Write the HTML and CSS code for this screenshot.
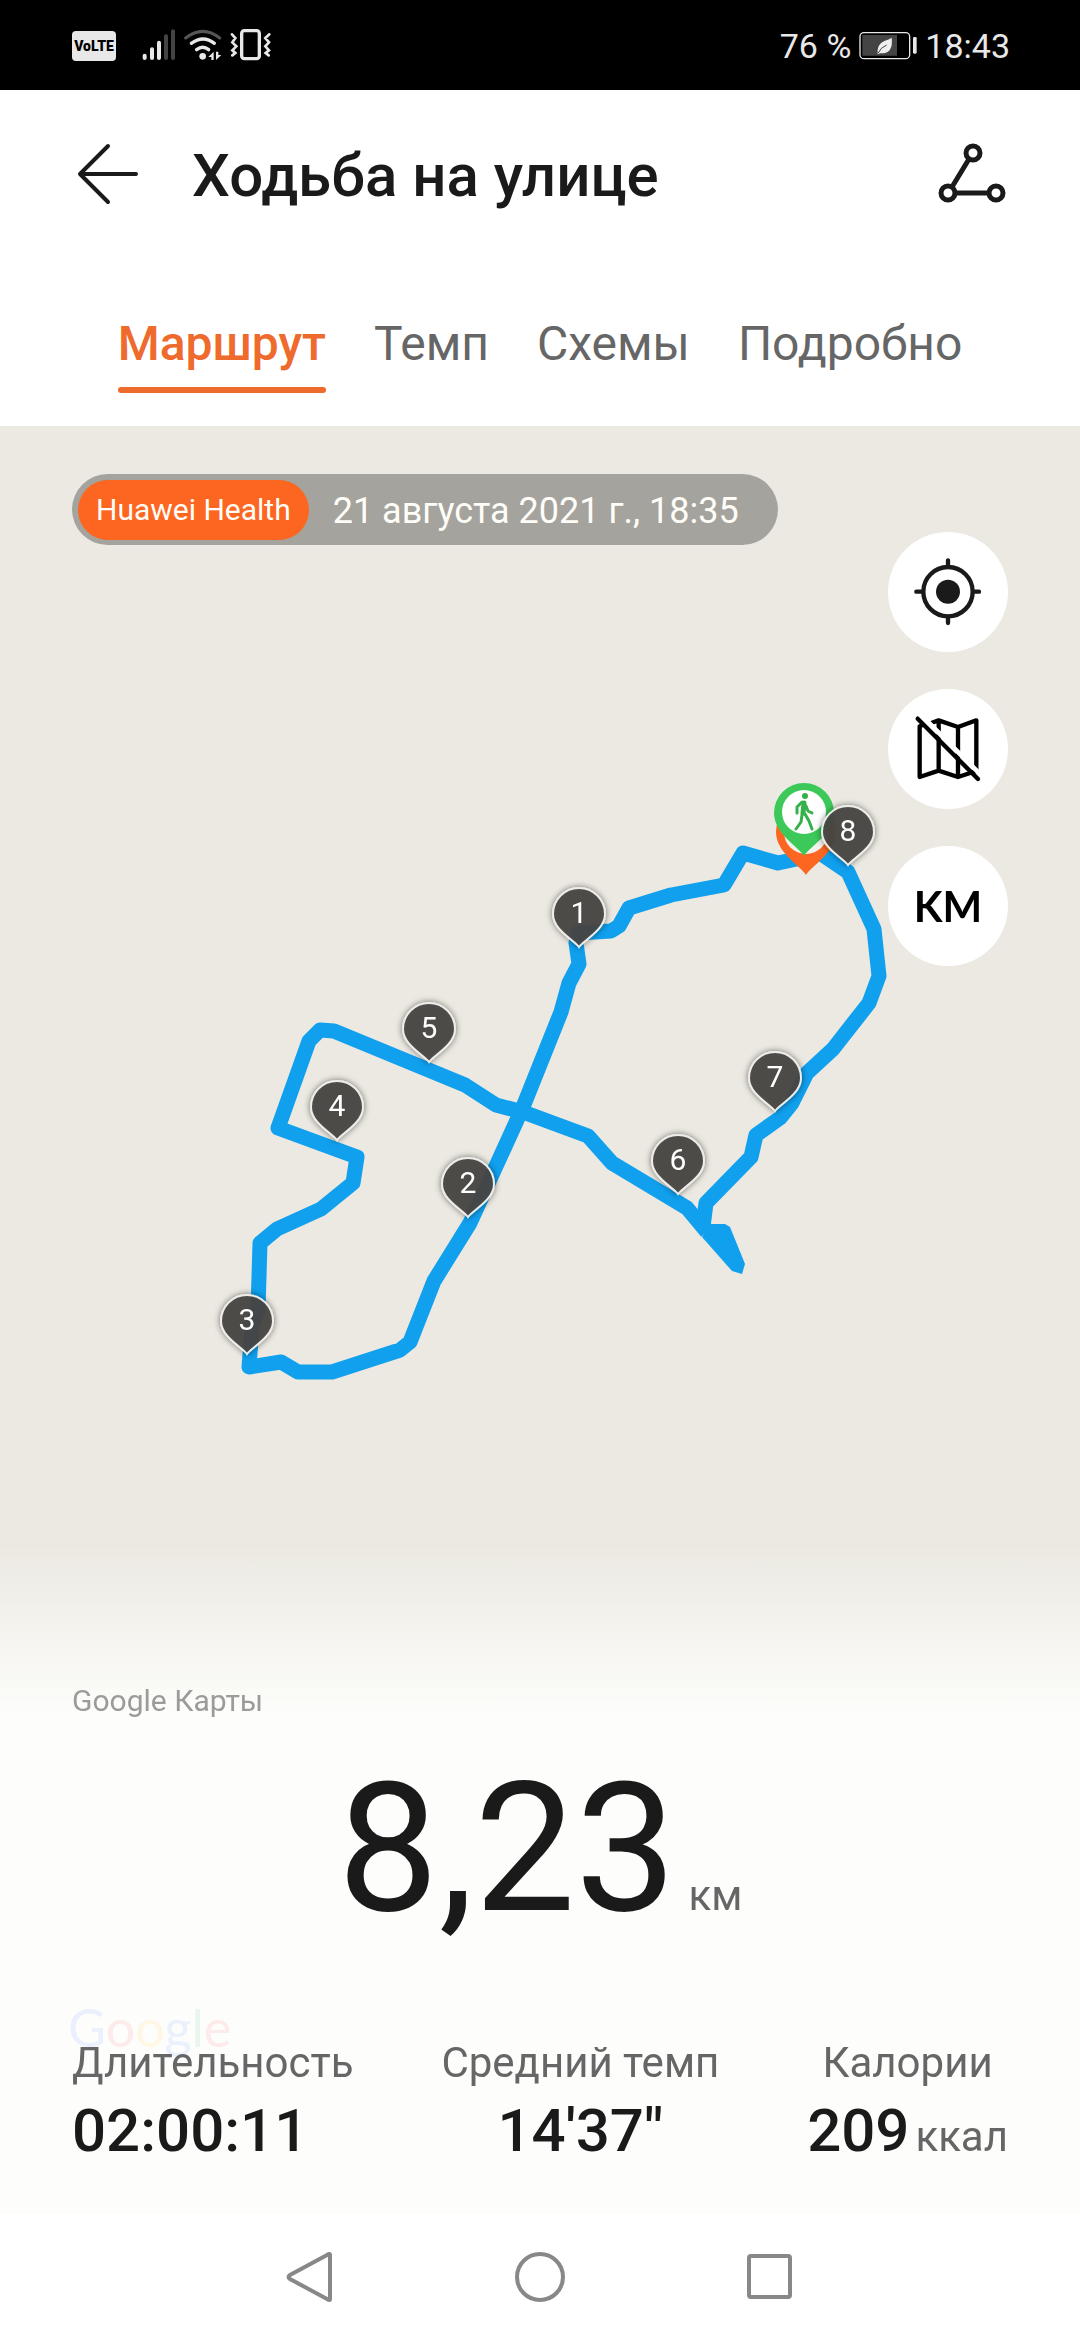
FILE: index.html
```html
<!DOCTYPE html>
<html lang="ru">
<head>
<meta charset="utf-8">
<meta name="viewport" content="width=device-width, initial-scale=1">
<title>Ходьба на улице</title>
<link rel="stylesheet" href="styles.css">
</head>
<body>
<div class="status">
  <div class="status-side">
    <span class="volte">VoLTE</span>
    <svg class="status-icons" width="132" height="34" viewBox="306 88 396 102" fill="none" stroke="#e8e8e8" stroke-linecap="round" aria-hidden="true">
      <path stroke-width="12" d="M314 168v7M336 149v26M357 129v46"/>
      <path stroke-width="12" stroke="#444" d="M378 110v65M399 95v80"/>
      <path stroke-width="9" stroke="#555" d="M437 115q52-40 102 0"/>
      <path stroke-width="10" d="M454 131q36-26 69 0M470 150q18-14 36 0"/>
      <circle cx="488" cy="170" r="10" fill="#e8e8e8" stroke="none"/>
      <path fill="#e8e8e8" stroke="none" d="M505 172l16-16v25h-7v-9zM544 166l-16 15v-25h7v10z"/>
      <rect x="605" y="93" width="53" height="84" rx="8" stroke-width="10"/>
      <path stroke-width="8" d="M576 104l10 11-9 13 12 12-12 12 9 8-9 7M688 104l-12 11 11 13-11 12 11 12-10 8 9 7"/>
    </svg>
  </div>
  <div class="status-side status-right">
    <span>76 %</span>
    <svg width="58" height="30" viewBox="354 93 174 90" aria-hidden="true">
      <rect x="357" y="98" width="149" height="78" rx="12" fill="none" stroke="#e8e8e8" stroke-width="4"/>
      <path fill="#444" d="M364 105h104v62H364z"/>
      <rect x="516" y="111" width="11" height="50" rx="4" fill="#e8e8e8"/>
      <path fill="#eee" d="M452 113q6 49-34 47l-8 3q-3-31 20-40 14-4 22-10z"/>
      <path fill="none" stroke="#444" stroke-width="3" d="M411 160q8-18 26-25"/>
    </svg>
    <span>18:43</span>
  </div>
</div>

<header class="header">
  <button class="icon-button" type="button" aria-label="Назад">
    <svg width="66" height="64" viewBox="0 0 66 64" fill="none" stroke="#1a1a1a" stroke-width="4" stroke-linecap="round" stroke-linejoin="round"><path d="M64 32H8M36 4L8 32l28 28"/></svg>
  </button>
  <h1 class="title">Ходьба на улице</h1>
  <button class="icon-button" type="button" aria-label="Поделиться">
    <svg width="72" height="66" viewBox="0 0 72 66" fill="none" stroke="#1a1a1a" stroke-width="5"><circle cx="37" cy="12" r="7"/><circle cx="12" cy="52" r="7"/><circle cx="60" cy="52" r="7"/><path d="M33 18L16 46M19 52h34"/></svg>
  </button>
</header>

<nav class="tabs">
  <button class="tab tab-active" type="button">Маршрут</button>
  <button class="tab" type="button">Темп</button>
  <button class="tab" type="button">Схемы</button>
  <button class="tab" type="button">Подробно</button>
</nav>

<main class="stage">
  <svg class="map" viewBox="0 426 1080 1124" role="img" aria-label="Маршрут на карте">
    <defs>
      <filter id="shade" x="-30%" y="-30%" width="160%" height="160%"><feDropShadow dx="0" dy="0" stdDeviation="3" flood-color="#000" flood-opacity=".55"/></filter>
      <path id="drop" d="M0-1C-5-8-26-18-26-34a26 26 0 0 1 52 0C26-18 5-8 0-1z"/>
      <path id="place" fill-rule="evenodd" d="M0 0C-5-9-30-22-30-43a30 30 0 0 1 60 0C30-22 5-9 0 0z"/>
    </defs>
    <g fill="none" stroke="#10a0ee" stroke-width="15" stroke-linejoin="round">
      <path d="M806 857L778 863 743 853 724 885 671 895 629 908 619 926 611 931 578 933 576 943 579 964 569 983 561 1012 523 1107 470 1223 434 1281 410 1342 400 1350 332 1372 298 1372 281 1362 249 1367 252 1327 258 1310 260 1243 277 1229 321 1209 353 1183 357 1157 278 1128 309 1041 320 1030 334 1031 465 1085 496 1105 523 1112 588 1136 612 1163 687 1208 707 1232"/>
      <path d="M703 1227L706 1203 751 1157 756 1135 780 1118 792 1103 807 1073 833 1049 869 1003 879 976 874 929 848 872 823 855 806 850"/>
    </g>
    <path fill="#10a0ee" d="M702 1237l30 34 10 3 3-10-15-37-5-3h-14z"/>
    <g transform="translate(806 875)"><use href="#place" fill="#fc6620"/><circle cy="-43" r="22" fill="#f4f2ed"/></g>
    <g transform="translate(804 856)">
      <use href="#place" fill="#3cc95a"/><circle cy="-44" r="22" fill="#fff"/>
      <g fill="none" stroke="#35b04a" stroke-width="3" stroke-linecap="round" stroke-linejoin="round"><circle cx="1" cy="-60" r="2" fill="#35b04a" stroke-width="2"/><path stroke-width="5" d="M0-53l-1 10"/><path d="M-2-54l-5 5v6M2-50l2 5 4 2M-2-41l-1 7-5 7M1-42l4 7 3 8"/></g>
    </g>
    <g fill="#474542" fill-opacity=".92" stroke="#eeedea" stroke-width="2">
      <g filter="url(#shade)">
        <use href="#drop" x="579" y="948"/><use href="#drop" x="468" y="1218"/><use href="#drop" x="247" y="1355"/><use href="#drop" x="337" y="1141"/>
        <use href="#drop" x="429" y="1063"/><use href="#drop" x="678" y="1195"/><use href="#drop" x="775" y="1112"/><use href="#drop" x="848" y="866"/>
      </g>
    </g>
    <g class="pin-text">
      <text x="579" y="923">1</text><text x="468" y="1193">2</text><text x="247" y="1330">3</text><text x="337" y="1116">4</text>
      <text x="429" y="1038">5</text><text x="678" y="1170">6</text><text x="775" y="1087">7</text><text x="848" y="841">8</text>
    </g>
  </svg>

  <div class="overlay">
    <div class="map-top">
      <div class="badge"><span class="badge-app">Huawei Health</span><span class="badge-date">21 августа 2021 г., 18:35</span></div>
      <div class="map-buttons">
        <button class="round" type="button" aria-label="Моё местоположение">
          <svg width="120" height="120" viewBox="84 65 360 360" fill="none" stroke="#1a1a1a" stroke-width="13" stroke-linecap="round"><circle cx="264" cy="244" r="74"/><circle cx="264" cy="244" r="36" fill="#1a1a1a" stroke="none"/><path d="M264 150v18M264 320v18M169 244h18M341 244h16"/></svg>
        </button>
        <button class="round" type="button" aria-label="Скрыть карту">
          <svg width="120" height="120" viewBox="81 536 360 360" fill="none" stroke="#000" stroke-width="13" stroke-linecap="round" stroke-linejoin="round"><path d="M176 648v152l57-19 58 19 55-18V630l-55 20-58-20-24 9M233 632v148M291 650v148M176 648l8-4"/><path stroke="#fff" stroke-width="14" d="M192 626l166 166"/><path d="M170 625l181 181"/></svg>
        </button>
        <button class="round" type="button">KM</button>
      </div>
    </div>

    <section class="summary">
      <p class="provider">Google Карты</p>
      <p class="distance"><span class="distance-value">8,23</span><span class="unit">км</span></p>
      <div class="stats-wrap">
        <span class="google" aria-hidden="true"><span class="g-blue">G</span><span class="g-red">o</span><span class="g-yellow">o</span><span class="g-blue">g</span><span class="g-green">l</span><span class="g-red">e</span></span>
        <dl class="stats">
          <div class="stat stat-start"><dt>Длительность</dt><dd>02:00:11</dd></div>
          <div class="stat"><dt>Средний темп</dt><dd>14'37"</dd></div>
          <div class="stat"><dt>Калории</dt><dd>209<span class="unit unit-near">ккал</span></dd></div>
        </dl>
      </div>
    </section>
  </div>
</main>

<footer class="system">
  <button class="icon-button" type="button" aria-label="Назад"><svg width="60" height="60" viewBox="0 0 60 60"><path d="M50 8v44q0 2-3 0L10 32q-3-2 0-4L47 8q3-2 3 0z"/></svg></button>
  <button class="icon-button" type="button" aria-label="Домой"><svg width="60" height="60" viewBox="0 0 60 60"><circle cx="30" cy="30" r="23"/></svg></button>
  <button class="icon-button" type="button" aria-label="Недавние"><svg width="60" height="60" viewBox="0 0 60 60"><rect x="9" y="9" width="41" height="41" rx="2"/></svg></button>
</footer>
</body>
</html>
```
FILE: styles.css
```css
* { box-sizing: border-box; }

body {
  margin: 0;
  min-height: 100vh;
  display: flex;
  flex-direction: column;
  background: #fff;
  color: #1a1a1a;
  font-family: Roboto, "Noto Sans", sans-serif;
}

button {
  padding: 0;
  border: 0;
  background: none;
  color: inherit;
  font: inherit;
}

svg { display: block; }
p, dl, dd, h1 { margin: 0; }

.status {
  height: 90px;
  padding: 2px 70px 0 72px;
  display: flex;
  align-items: center;
  justify-content: space-between;
  background: #000;
  color: #e8e8e8;
  font-size: 34px;
  line-height: 40px;
}

.status-side { display: flex; align-items: center; gap: 26px; }
.status-right { gap: 8px; }

.volte {
  width: 44px;
  height: 30px;
  border-radius: 4px;
  background: #e8e8e8;
  color: #000;
  font-size: 14px;
  font-weight: 900;
  line-height: 30px;
  text-align: center;
}

.header {
  height: 168px;
  padding: 0 72px;
  display: flex;
  align-items: center;
}

.title {
  flex: 1;
  margin-left: 54px;
  padding-top: 4px;
  font-size: 60px;
  font-weight: 500;
  line-height: 72px;
}

.tabs {
  height: 168px;
  padding-top: 58px;
  display: flex;
  justify-content: center;
  align-items: flex-start;
  gap: 48px;
}

.tab {
  color: #666;
  font-size: 48px;
  line-height: 56px;
}

.tab-active { color: #ef6a2d; font-weight: 500; }

.tab-active::after {
  content: "";
  display: block;
  height: 6px;
  margin-top: 15px;
  border-radius: 3px;
  background: #ef6a2d;
}

.stage {
  flex: 1;
  display: grid;
  background: #ebe9e1;
}

.map, .overlay { grid-area: 1 / 1; }
.map { width: 100%; align-self: start; }

.pin-text {
  fill: #fff;
  font-size: 30px;
  text-anchor: middle;
}

.overlay {
  position: relative;
  display: flex;
  flex-direction: column;
  justify-content: space-between;
}

.map-top {
  padding: 48px 72px 0;
  display: flex;
  flex-direction: column;
}

.badge {
  align-self: flex-start;
  height: 71px;
  padding: 0 39px 0 6px;
  display: flex;
  align-items: center;
  gap: 24px;
  border-radius: 36px;
  background: #a4a39e;
  color: #fffdf8;
  font-size: 36px;
  line-height: 44px;
}

.badge-date { padding-top: 2px; }

.badge-app {
  padding: 0 18px;
  border-radius: 30px;
  background: #fc6620;
  font-size: 30px;
  line-height: 60px;
}

.map-buttons {
  align-self: flex-end;
  margin-top: -13px;
  display: flex;
  flex-direction: column;
  gap: 37px;
}

.round {
  width: 120px;
  height: 120px;
  border-radius: 50%;
  background: #fff;
  color: #000;
  font-family: Lato, sans-serif;
  font-size: 42px;
  font-weight: 700;
}

.summary {
  padding: 145px 72px 41px;
  background: linear-gradient(rgba(253, 253, 251, 0), #fdfdfb 180px, #fdfdfc);
}

.provider {
  color: #9b9b99;
  font-size: 30px;
  line-height: 36px;
}

.distance {
  margin-top: 40px;
  display: flex;
  justify-content: center;
  align-items: baseline;
  gap: 12px;
}

.distance-value { font-size: 180px; line-height: 180px; }
.unit { color: #666; font-size: 42px; font-weight: 400; }
.unit-near { margin-left: 6px; }

.stats-wrap { position: relative; margin-top: 100px; }

.stats {
  position: relative;
  display: flex;
  justify-content: space-between;
}

.stat {
  display: flex;
  flex-direction: column;
  gap: 8px;
  align-items: center;
}

.stat-start { align-items: flex-start; }
.stat dt { color: #666; font-size: 42px; line-height: 48px; }
.stat dd { font-size: 60px; font-weight: 500; line-height: 72px; }

.google {
  position: absolute;
  left: -4px;
  bottom: 114px;
  font-family: Lato, sans-serif;
  font-size: 52px;
  line-height: 64px;
}

.g-blue { color: #ebf0fd; }
.g-red { color: #fdeaea; }
.g-yellow { color: #fef7e4; }
.g-green { color: #e9f6ec; }

.system {
  height: 126px;
  padding: 0 280px;
  display: flex;
  align-items: center;
  justify-content: space-between;
}

.system svg { fill: none; stroke: #888; stroke-width: 4; }
```
